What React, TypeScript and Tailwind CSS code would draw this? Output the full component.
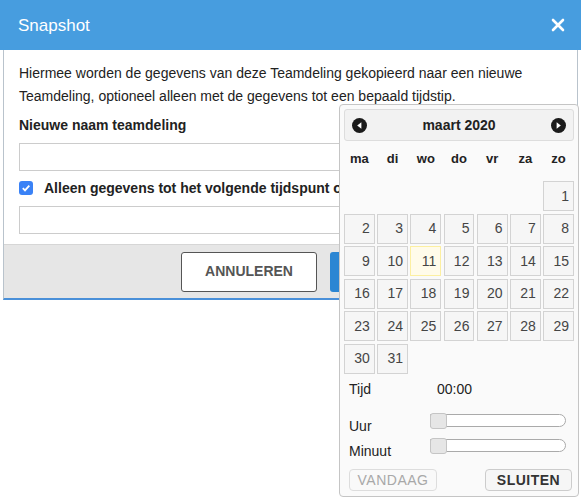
const font = { fontFamily: '"Liberation Sans", Arial, sans-serif' };

const days = ["ma", "di", "wo", "do", "vr", "za", "zo"];

function NavIcon({ dir }: { dir: "prev" | "next" }) {
  return (
    <svg width="15" height="15" viewBox="0 0 16 16">
      <circle cx="8" cy="8" r="8" fill="#1b1b1b" />
      {dir === "prev" ? (
        <path d="M10 4.5 L5.5 8 L10 11.5 Z" fill="#fff" />
      ) : (
        <path d="M6 4.5 L10.5 8 L6 11.5 Z" fill="#fff" />
      )}
    </svg>
  );
}

function Slider() {
  return (
    <div className="relative h-[13px] w-[136px] rounded-r-full rounded-l-[3px] border border-[#aaaaaa] bg-white">
      <div className="absolute -left-[1px] -top-[2px] h-[16px] w-[17px] rounded-[3px] border border-[#c5c5c5] bg-[#e6e6e6]" />
    </div>
  );
}

function Calendar() {
  // maart 2020 starts on a Sunday
  const cells: (number | null)[] = [null, null, null, null, null, null];
  for (let d = 1; d <= 31; d++) cells.push(d);

  return (
    <div
      className="absolute left-[339px] top-[104px] h-[393px] w-[240px] rounded-[4px] border border-[#c5c5c5] bg-[#fafafa] px-[4px] pt-[4px] text-[#333]"
      style={font}
    >
      <div className="flex h-[32px] items-center justify-between rounded-[3px] border border-[#dddddd] bg-[#f2f2f2] px-[7px]">
        <NavIcon dir="prev" />
        <span className="text-[14px] font-bold text-[#222]">maart 2020</span>
        <NavIcon dir="next" />
      </div>

      <div className="grid h-[40px] grid-cols-7 items-center gap-x-[2.3px] pb-[4px]">
        {days.map((d) => (
          <div key={d} className="text-center text-[13px] font-bold text-[#222]">
            {d}
          </div>
        ))}
      </div>

      <div className="grid grid-cols-7 gap-x-[2.3px] gap-y-[2.5px]">
        {cells.map((d, i) =>
          d === null ? (
            <div key={i} className="h-[30px]" />
          ) : (
            <div
              key={i}
              className={`flex h-[30px] items-center justify-end pr-[4px] text-[14px] text-[#454545] ${
                d === 11
                  ? "border border-[#fcefa1] bg-[#fffbea]"
                  : "border border-[#d3d3d3] bg-[#f6f6f6]"
              }`}
            >
              {d}
            </div>
          )
        )}
      </div>

      <div className="mt-[6px] pl-[5px] text-[14px] text-[#222]">
        <div className="flex h-[20px] items-center">
          <span className="w-[88px]">Tijd</span>
          <span>00:00</span>
        </div>
        <div className="mt-[14px] flex h-[24px] items-start">
          <span className="w-[81px] pt-[2px]">Uur</span>
          <Slider />
        </div>
        <div className="mt-[1px] flex h-[24px] items-start">
          <span className="w-[81px] pt-[2px]">Minuut</span>
          <Slider />
        </div>
      </div>

      <div className="mt-[6px] flex items-center justify-between pl-[5px] pr-[2px]">
        <button className="h-[22px] w-[88px] rounded-[4px] border border-[#dddddd] bg-[#f9f9f9] text-[14px] tracking-[0.5px] text-[#a8a8a8]">
          VANDAAG
        </button>
        <button className="h-[22px] w-[87px] rounded-[4px] border border-[#cccccc] bg-[#f6f6f6] text-[14px] font-bold tracking-[0.5px] text-[#333]">
          SLUITEN
        </button>
      </div>
    </div>
  );
}

export default function App() {
  return (
    <div className="relative h-[500px] w-[581px] overflow-hidden bg-white" style={font}>
      <div className="w-[581px]">
        <div className="flex h-[50px] items-center justify-between bg-[#479ddf] pl-[18px] pr-[16px]">
          <span className="pt-[2px] text-[17px] text-white">Snapshot</span>
          <svg width="14" height="14" viewBox="0 0 14 14">
            <path d="M2 2 L12 12 M12 2 L2 12" stroke="#fff" strokeWidth="2.6" strokeLinecap="round" />
          </svg>
        </div>

        <div className="mx-[3px] border-x border-b-2 border-x-[#b9c3cc] border-b-[#4a90d9] bg-white">
          <div className="px-[15px] pt-[12px] text-[14px] text-[#222]">
            <p className="leading-[23px]">
              Hiermee worden de gegevens van deze Teamdeling gekopieerd naar een nieuwe
              Teamdeling, optioneel alleen met de gegevens tot een bepaald tijdstip.
            </p>
            <div className="mt-[6px] text-[14px] font-bold leading-[23px]">Nieuwe naam teamdeling</div>
            <div className="mt-[6px] h-[28px] w-full border border-[#cccccc] bg-white" />
            <div className="mt-[10px] flex h-[14px] items-center gap-[11px]">
              <span className="flex h-[14px] w-[14px] items-center justify-center rounded-[3px] bg-[#3a82f6]">
                <svg width="10" height="10" viewBox="0 0 10 10">
                  <path d="M1.8 5.2 L4 7.4 L8.3 2.6" stroke="#fff" strokeWidth="1.8" fill="none" />
                </svg>
              </span>
              <span className="whitespace-nowrap text-[14px] font-bold">
                Alleen gegevens tot het volgende tijdspunt opnemen
              </span>
            </div>
            <div className="mt-[11px] h-[28px] w-full border border-[#cccccc] bg-white" />
          </div>

          <div className="mt-[10px] flex h-[54px] items-center gap-[13px] border-t border-[#d6d6d6] bg-[#e6e6e6] pl-[177px]">
            <button className="h-[40px] w-[136px] rounded-[3px] border border-[#555] bg-white text-[14px] font-bold text-[#555]">
              ANNULEREN
            </button>
            <button className="h-[40px] w-[136px] rounded-[3px] bg-[#2b86d3]" />
          </div>
        </div>
      </div>

      <Calendar />
    </div>
  );
}
